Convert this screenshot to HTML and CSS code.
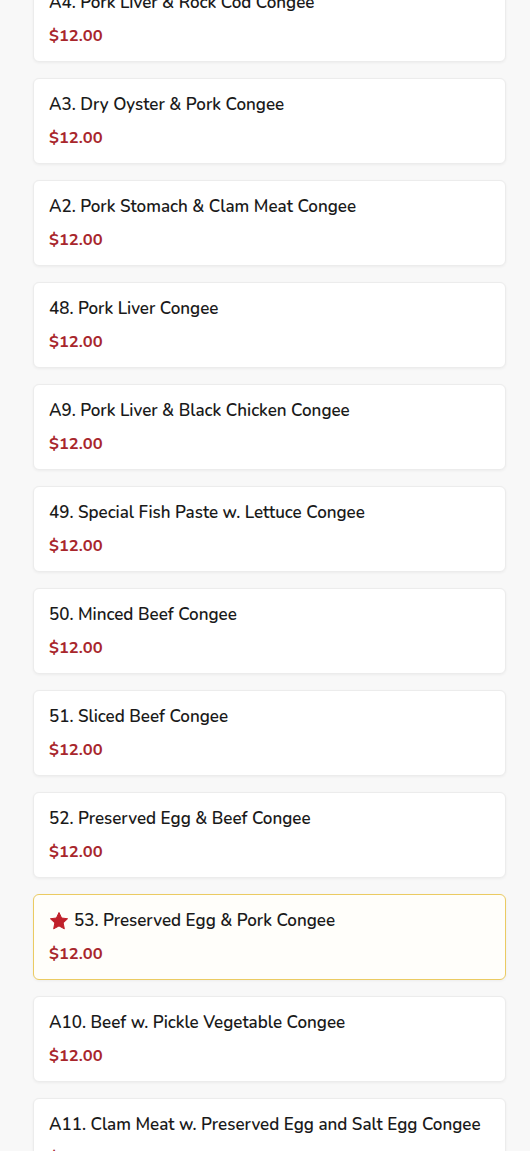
FILE: index.html
```html
<!DOCTYPE html>
<html lang="en">
<head>
    <meta charset="UTF-8">
    <meta name="viewport" content="width=device-width, initial-scale=1.0">
    <title>Congee Menu</title>
    <link rel="stylesheet" href="styles.css">
</head>
<body>
    <div class="menu-list">
        <div class="menu-item">
            <div class="item-name">A4. Pork Liver &amp; Rock Cod Congee</div>
            <div class="item-price">$12.00</div>
        </div>
        <div class="menu-item">
            <div class="item-name">A3. Dry Oyster &amp; Pork Congee</div>
            <div class="item-price">$12.00</div>
        </div>
        <div class="menu-item">
            <div class="item-name">A2. Pork Stomach &amp; Clam Meat Congee</div>
            <div class="item-price">$12.00</div>
        </div>
        <div class="menu-item">
            <div class="item-name">48. Pork Liver Congee</div>
            <div class="item-price">$12.00</div>
        </div>
        <div class="menu-item">
            <div class="item-name">A9. Pork Liver &amp; Black Chicken Congee</div>
            <div class="item-price">$12.00</div>
        </div>
        <div class="menu-item">
            <div class="item-name">49. Special Fish Paste w. Lettuce Congee</div>
            <div class="item-price">$12.00</div>
        </div>
        <div class="menu-item">
            <div class="item-name">50. Minced Beef Congee</div>
            <div class="item-price">$12.00</div>
        </div>
        <div class="menu-item">
            <div class="item-name">51. Sliced Beef Congee</div>
            <div class="item-price">$12.00</div>
        </div>
        <div class="menu-item">
            <div class="item-name">52. Preserved Egg &amp; Beef Congee</div>
            <div class="item-price">$12.00</div>
        </div>
        <div class="menu-item featured">
            <div class="item-name">
                <svg class="star" viewBox="0 0 24 24" width="20" height="20">
                    <path d="M12 1.8l3.1 6.6 7.2.9-5.3 5 1.4 7.1L12 17.9l-6.4 3.5 1.4-7.1-5.3-5 7.2-.9z" fill="#c0202a" stroke="#c0202a" stroke-width="1.2" stroke-linejoin="round"/>
                </svg>
                53. Preserved Egg &amp; Pork Congee
            </div>
            <div class="item-price">$12.00</div>
        </div>
        <div class="menu-item">
            <div class="item-name">A10. Beef w. Pickle Vegetable Congee</div>
            <div class="item-price">$12.00</div>
        </div>
        <div class="menu-item">
            <div class="item-name">A11. Clam Meat w. Preserved Egg and Salt Egg Congee</div>
            <div class="item-price">$12.00</div>
        </div>
    </div>
</body>
</html>
```

FILE: styles.css
```css
body {
    margin: 0;
    background-color: #f8f8f8;
    font-family: "Nunito", Lato, "Noto Sans", sans-serif;
    overflow: hidden;
}
.menu-list {
    display: flex;
    flex-direction: column;
    gap: 16px;
    width: 473px;
    margin: -24px 0 0 33px;
}
.menu-item {
    background-color: white;
    border: 1px solid #ececec;
    border-radius: 6px;
    box-shadow: 0 1px 3px rgba(0,0,0,0.05);
    padding: 15px 15px 14px 15px;
    height: 86px;
    box-sizing: border-box;
}
.menu-item.featured {
    border-color: #ebcb62;
    background-color: #fffefa;
}
.item-name {
    display: flex;
    align-items: center;
    gap: 5px;
    font-size: 17px;
    font-weight: 600;
    line-height: 22px;
    color: #1a1a1a;
    white-space: nowrap;
}
.item-price {
    margin-top: 11px;
    font-size: 16.5px;
    font-weight: 700;
    line-height: 22px;
    color: #a8262c;
}
.star {
    flex-shrink: 0;
}
```
